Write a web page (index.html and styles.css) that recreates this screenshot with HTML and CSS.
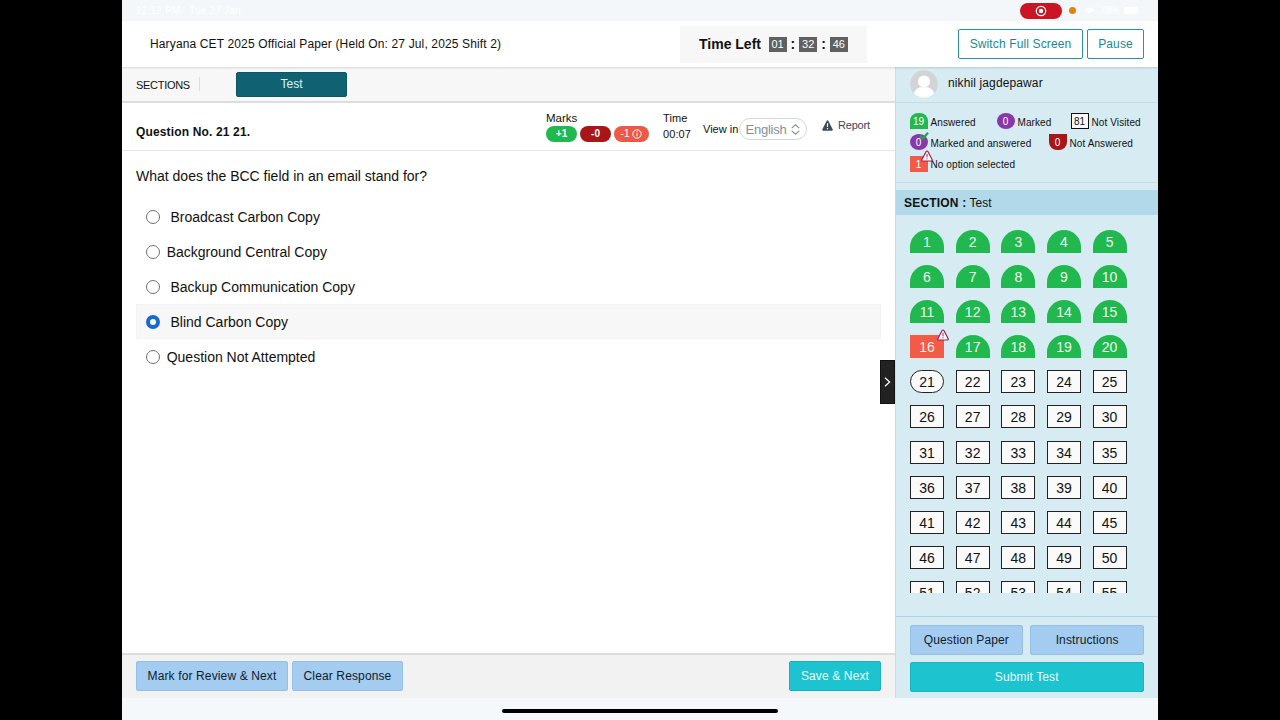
FILE: index.html
```html
<!DOCTYPE html>
<html lang="en">
<head>
<meta charset="utf-8">
<title>Haryana CET 2025 Official Paper</title>
<link rel="stylesheet" href="styles.css">
</head>
<body>
<div class="device">
  <div class="status">
    <span class="clock">12:12 PM&nbsp;&nbsp; Tue 27 Jan</span>
    <div class="indicators">
      <span class="recording"><svg width="12" height="12" viewBox="0 0 12 12"><circle cx="6" cy="6" r="4.7" fill="none" stroke="#fff" stroke-width="1.3"/><circle cx="6" cy="6" r="2.2" fill="#fff"/></svg></span>
      <span class="mic"></span>
      <svg class="wifi" width="9" height="7" viewBox="0 0 9 7"><path d="M0 2.5Q4.5-1.5 9 2.5L4.5 7Z" fill="#fff"/></svg>
      <span class="percent">78%</span>
      <span class="battery"></span>
    </div>
  </div>
  <header class="header">
    <h1 class="title"><span>Haryana CET 2025 Official Paper (Held On: 27 Jul, 2025 Shift 2)</span></h1>
    <div class="timer"><b>Time Left</b><span class="digits">01</span><i>:</i><span class="digits">32</span><i>:</i><span class="digits">46</span></div>
    <div class="header-actions"><button class="outline full">Switch Full Screen</button><button class="outline pause">Pause</button></div>
  </header>
  <div class="workspace">
    <main class="main">
      <div class="sections"><span class="sections-label">SECTIONS</span><span class="section-tab">Test</span></div>
      <div class="question-bar">
        <b class="number">Question No. 21 21.</b>
        <div class="marks">
          <span>Marks</span>
          <div class="pills"><span class="pill plus">+1</span><span class="pill zero">-0</span><span class="pill minus">-1 <svg width="10" height="10" viewBox="0 0 10 10" fill="none" stroke="#fff"><circle cx="5" cy="5" r="4.2"/><path d="M5 4.4V7.3M5 2.5V3.5"/></svg></span></div>
        </div>
        <div class="time"><span>Time</span><span>00:07</span></div>
        <div class="view"><span>View in</span><span class="select">English <svg width="9" height="11" viewBox="0 0 9 11" fill="none" stroke="#849196" stroke-width="1.2"><path d="M.7 4.1 4.5.9 8.3 4.1M.7 6.9 4.5 10.1 8.3 6.9"/></svg></span></div>
        <div class="report"><svg width="11" height="11" viewBox="0 0 11 11"><path d="M5.5.3Q6.1.3 6.4.9L10.8 9.6Q11 10.7 10 10.7H1Q0 10.7.2 9.6L4.6.9Q4.9.3 5.5.3Z" fill="#424b5c"/><path d="M5.5 3.2V7M5.5 8V9.2" stroke="#fff" stroke-width="1.1"/></svg><span>Report</span></div>
      </div>
      <div class="question">
        <p class="prompt"><span>What does the BCC field in an email stand for?</span></p>
        <div class="options">
          <div class="option wide"><span class="radio"></span><span>Broadcast Carbon Copy</span></div>
          <div class="option"><span class="radio"></span><span>Background Central Copy</span></div>
          <div class="option wide"><span class="radio"></span><span>Backup Communication Copy</span></div>
          <div class="option wide selected"><span class="radio"></span><span>Blind Carbon Copy</span></div>
          <div class="option"><span class="radio"></span><span>Question Not Attempted</span></div>
        </div>
      </div>
      <footer class="footer"><button class="blue review">Mark for Review &amp; Next</button><button class="blue clear">Clear Response</button><button class="teal save">Save &amp; Next</button></footer>
      <div class="collapse"><svg width="7" height="10" viewBox="0 0 7 10" fill="none" stroke="#fff" stroke-width="1.2"><path d="M1 .8 5.6 5 1 9.2"/></svg></div>
    </main>
    <aside class="sidebar">
      <div class="user"><svg width="28" height="28" viewBox="0 0 28 28"><defs><clipPath id="face"><circle cx="14" cy="14" r="13.8"/></clipPath></defs><g clip-path="url(#face)"><rect width="28" height="28" fill="#d2d4d6"/><circle cx="14" cy="11.5" r="6" fill="#fff"/><path d="M3.5 28V24Q5 18.7 10 17.2H18Q23 18.7 24.5 24V28Z" fill="#fff"/></g></svg><span>nikhil jagdepawar</span></div>
      <div class="legend">
        <div class="legend-row"><span class="key answered">19</span><span class="k1">Answered</span><span class="key marked">0</span><span class="k2">Marked</span><span class="key unvisited">81</span><span>Not Visited</span></div>
        <div class="legend-row"><span class="key marked">0<svg class="check" width="10" height="8" viewBox="0 0 10 8"><path d="M1 3.8 4 6.4 9 .8" fill="none" stroke="#22a452" stroke-width="2.2"/></svg></span><span class="k4">Marked and answered</span><span class="key unanswered">0</span><span>Not Answered</span></div>
        <div class="legend-row"><span class="key no-option">1<svg class="warn" width="12" height="12" viewBox="0 0 12 12"><path d="M6 1Q6.6 1 7 1.8L11.2 9.8Q11.5 11 10.4 11H1.6Q.5 11 .8 9.8L5 1.8Q5.4 1 6 1Z" fill="#fff" stroke="#a51e4e" stroke-width="1.2"/><path d="M6 3.8V7.4M6 8.3V9.4" stroke="#a51e4e"/></svg></span><span>No option selected</span></div>
      </div>
      <div class="section-name"><b>SECTION :</b> <span>Test</span></div>
      <div class="palette" id="palette"></div>
      <div class="side-actions"><button class="blue">Question Paper</button><button class="blue">Instructions</button><button class="teal submit">Submit Test</button></div>
    </aside>
  </div>
  <div class="home"><span></span></div>
</div>
<script src="palette.js"></script>
</body>
</html>
```
FILE: styles.css
```css
* { box-sizing: border-box; }
body { margin: 0; background: #000; color: #111; font-family: "Liberation Sans", Arial, sans-serif; font-size: 13px; }
button { font: inherit; padding: 0; border-radius: 2px; white-space: nowrap; }
svg { display: block; flex: none; }
.device { width: 1036px; height: 720px; margin-left: 122px; background: #fff; display: flex; flex-direction: column; overflow: hidden; white-space: nowrap; }
.status { height: 21px; flex: none; background: #f3f7f9; color: #fff; display: flex; justify-content: space-between; align-items: center; padding-left: 14px; font-size: 10px; letter-spacing: .2px; }
.indicators { display: flex; align-items: center; width: 260px; padding-left: 122px; letter-spacing: 0; }
.recording { width: 42px; height: 16px; border-radius: 8px; background: #ca1524; display: flex; align-items: center; justify-content: center; }
.mic { width: 7px; height: 7px; border-radius: 50%; background: #df820f; margin-left: 7px; flex: none; }
.wifi { margin-left: 9px; }
.percent { margin-left: 6px; }
.battery { width: 14px; height: 7px; border-radius: 2px; background: #fff; margin-left: 4px; }
.header { height: 46px; flex: none; display: flex; align-items: center; padding: 0 14px 0 28px; background: #fff; box-shadow: 0 1px 2px #0002; z-index: 1; }
.title { margin: 0; width: 530px; font-size: 12px; font-weight: 400; letter-spacing: .14px; }
.timer { width: 187px; height: 37px; background: #f7f7f7; display: flex; align-items: center; padding-left: 19px; font-size: 14px; }
.timer b { width: 69.5px; }
.digits { width: 18px; height: 15px; background: #606060; color: #fff; font-size: 11px; line-height: 15px; text-align: center; }
.timer i { width: 12.7px; text-align: center; font-style: normal; font-weight: 700; }
.header-actions { margin-left: auto; display: flex; gap: 4px; }
.outline { height: 30px; border: 1px solid #2495a3; background: #fff; color: #16899b; font-size: 12px; letter-spacing: .13px; }
.full { width: 125px; }
.pause { width: 57px; }
.workspace { height: 631px; flex: none; display: flex; }
.main { width: 773px; position: relative; display: flex; flex-direction: column; }
.sections { height: 36px; flex: none; background: #f7f7f7; border-bottom: 2px solid #dcdddd; display: flex; align-items: center; padding-left: 14px; }
.sections-label { width: 64px; border-right: 1px solid #ddd; font-size: 11px; line-height: 12px; padding-top: 2px; letter-spacing: -.3px; }
.section-tab { width: 111px; height: 25px; margin-left: 36px; border-radius: 2px; background: #106273; border: 1px solid #0c5666; color: #d9f5fa; text-align: center; font-size: 12px; line-height: 22px; }
.question-bar { height: 48px; flex: none; border-bottom: 1px solid #e5e7e8; display: flex; padding-left: 14px; }
.number { width: 410px; line-height: 58px; font-size: 12px; letter-spacing: .15px; }
.marks { width: 117px; padding-top: 8px; font-size: 12px; line-height: 14px; }
.marks > span { font-size: 11.5px; }
.pills { display: flex; gap: 3px; margin-top: 1px; }
.pill { height: 16px; width: 31px; border-radius: 8px; color: #fff; font-size: 10px; line-height: 16px; text-align: center; font-weight: 700; }
.plus { background: #21b84f; }
.zero { background: #a81618; }
.minus { width: 35px; background: #ed5947; font-weight: 400; display: flex; align-items: center; justify-content: center; gap: 3px; }
.sections-label { letter-spacing: -.3px; }
.time { width: 40px; display: flex; flex-direction: column; padding-top: 7px; font-size: 11px; line-height: 16px; letter-spacing: .1px; }
.view { display: flex; height: 22px; margin-top: 15px; align-items: center; font-size: 11px; }
.view > span:first-child { width: 36px; }
.select { width: 68px; height: 22px; border: 1px solid #d5d8da; border-radius: 11px; color: #849196; font-size: 13px; letter-spacing: -.25px; display: flex; align-items: center; justify-content: center; gap: 5px; }
.report { display: flex; align-items: center; gap: 5px; height: 14px; margin: 15px 0 0 15px; color: #3d4656; font-size: 11px; letter-spacing: -.2px; }
.question { flex: 1; padding: 14px 14px 0; }
.prompt { margin: 0; line-height: 22px; font-size: 14px; }
.options { margin-top: 12px; font-size: 14px; }
.option { height: 35.1px; display: flex; align-items: center; gap: 7px; border: 1px solid transparent; padding-left: 8.7px; }
.wide { gap: 10.8px; }
.selected { background: #f7f7f7; border-color: #f3f3f3; }
.radio { width: 14px; height: 14px; border: 1px solid #707070; border-radius: 50%; flex: none; }
.selected .radio { border: 4px solid #136bd0; background: #fff; }
.footer { height: 45px; flex: none; border-top: 2px solid #dcdddd; background: #f2f2f2; display: flex; padding: 6px 14px 0; gap: 4px; }
.blue, .teal { height: 30px; font-size: 12px; letter-spacing: .13px; color: #0c1d2c; background: #a4cbf0; border: 1px solid #95bfe6; }
.teal { background: #1dc3cf; border-color: #17b5c3; color: #e9ffff; }
.review { width: 152px; }
.clear { width: 111px; }
.save { width: 92px; margin-left: auto; }
.collapse { position: absolute; right: 0; top: 293px; width: 15px; height: 44px; background: #222; border: 1px solid #111; display: flex; align-items: center; justify-content: center; }
.sidebar { width: 263px; background: #d7ebf3; border-left: 1px solid #cadde4; display: flex; flex-direction: column; }
.user { height: 36px; flex: none; display: flex; gap: 10px; padding: 3px 0 0 14px; border-bottom: 1px solid #c7dce3; font-size: 12px; line-height: 27px; letter-spacing: .12px; }
.legend { height: 80px; flex: none; border-bottom: 1px solid #c8dce3; padding: 10px 0 0 13.5px; font-size: 10px; }
.legend-row { display: flex; height: 21.2px; }
.legend-row > span:not(.key) { padding-top: 3px; line-height: 14px; letter-spacing: .1px; }
.key { position: relative; width: 18px; height: 16px; color: #fff; margin-right: 3px; font-size: 10px; line-height: 17px; text-align: center; flex: none; }
.answered { background: #21b84f; border-radius: 8px 8px 0 0; }
.marked { background: #8938a9; border-radius: 50%; }
.unvisited { background: #fafafa; border: 1px solid #111; color: #111; line-height: 15px; }
.unanswered { background: #a81618; border-radius: 0 0 8px 8px; }
.no-option { background: #f15b47; margin-top: 1px; }
.k1 { width: 66px; }
.k2 { width: 53px; }
.k4 { width: 118px; }
.check { position: absolute; right: -1px; top: -2px; }
.warn { position: absolute; right: -5px; top: -6px; }
.section-name { height: 25px; flex: none; margin-top: 7px; background: #b1d9e9; padding-left: 8px; font-size: 12px; line-height: 26px; }
.section-name b { letter-spacing: .2px; }
.palette { height: 378px; flex: none; padding: 15px 0 0 14px; display: grid; grid-template-columns: repeat(5, 34px); grid-auto-rows: 23px; column-gap: 11.65px; row-gap: 12.1px; overflow: hidden; align-content: start; }
.cell { position: relative; height: 23px; background: #fafafa; border: 1px solid #222; color: #111; font-size: 14px; line-height: 22px; text-align: center; }
.done { background: #21b84f; border: 0; border-radius: 17px 17px 0 0; color: #ecffef; line-height: 24px; }
.flagged { background: #f15b47; border: 0; color: #fff0ec; line-height: 24px; }
.current { border-radius: 12px; }
.side-actions { margin-top: 23px; flex: 1; border-top: 1px solid #aed5df; display: grid; grid-template: 30px 30px / 1fr 1fr; gap: 7px; padding: 7.5px 14px 0 13.5px; }
.submit { grid-column: 1 / 3; }
.home { flex: 1; background: #f5f8fa; display: flex; justify-content: center; padding-top: 11px; }
.home span { width: 276px; height: 4px; border-radius: 2px; background: #000; }
```
FILE: palette.js
```js
const palette = document.getElementById("palette");
const warning = document.querySelector(".warn");
for (let number = 1; number <= 55; number++) {
  const cell = document.createElement("span");
  cell.className = "cell";
  cell.textContent = number;
  if (number <= 20) cell.classList.add(number === 16 ? "flagged" : "done");
  if (number === 16) cell.append(warning.cloneNode(true));
  if (number === 21) cell.classList.add("current");
  palette.append(cell);
}
```
